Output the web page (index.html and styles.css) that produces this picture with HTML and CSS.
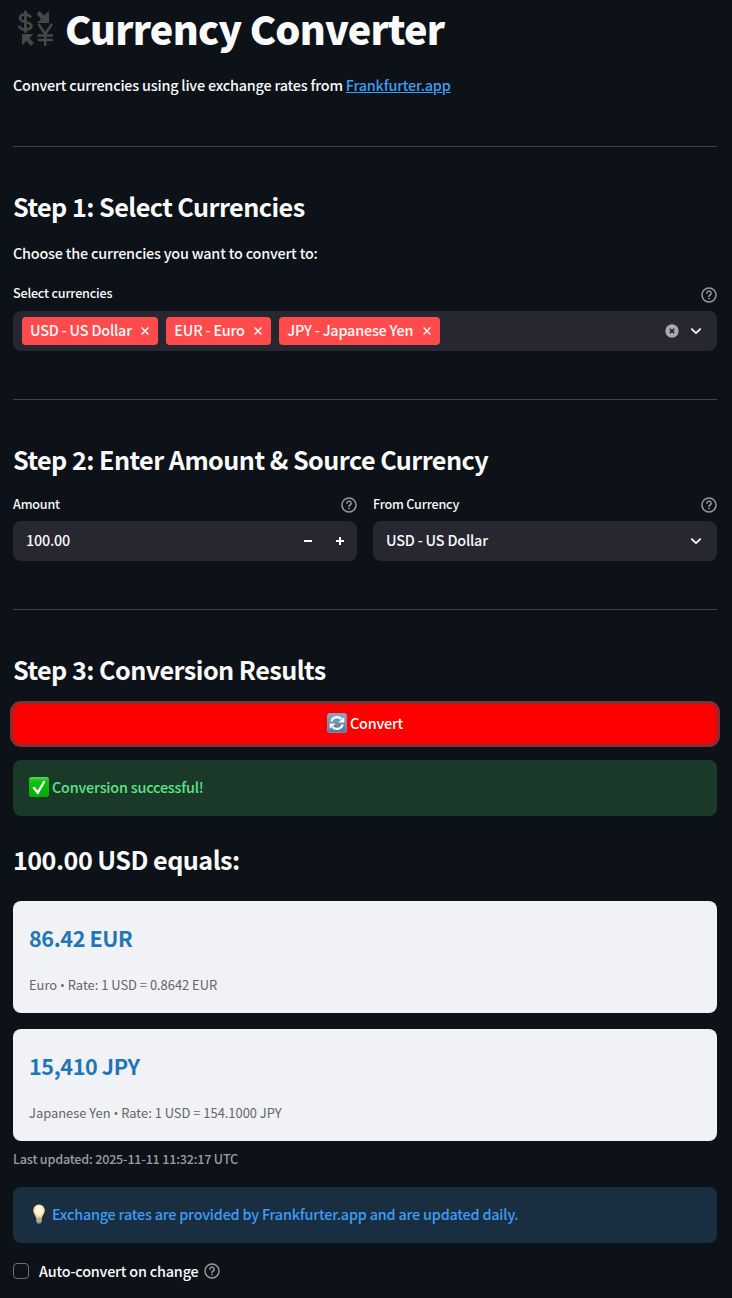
FILE: index.html
```
<!DOCTYPE html>
<html lang="en">
<head>
  <meta charset="UTF-8">
  <title>Currency Converter</title>
  <meta name="viewport" content="width=device-width,initial-scale=1">
  <link rel="stylesheet" href="styles.css">
</head>
<body>
  <!-- shared icons -->
  <svg class="defs" width="0" height="0">
    <symbol id="help" viewBox="0 0 16 16">
      <circle cx="8" cy="8" r="7" fill="none" stroke="currentColor" stroke-width="1.500"/>
      <path d="M5.900 6.200a2.100 2.100 0 1 1 3.200 1.800c-.7.45-1.100.8-1.100 1.400" fill="none" stroke="currentColor" stroke-width="1.500" stroke-linecap="round"/>
      <circle cx="8" cy="11.600" r=".9" fill="currentColor"/>
    </symbol>
    <symbol id="chevron" viewBox="0 0 16 16">
      <path d="M3.800 6.200 8 10.200l4.200-4" fill="none" stroke="currentColor" stroke-width="1.800" stroke-linecap="round" stroke-linejoin="round"/>
    </symbol>
    <symbol id="cross" viewBox="0 0 10 10">
      <path d="M1.600 1.600l6.800 6.800M8.400 1.600L1.600 8.400" fill="none" stroke="currentColor" stroke-width="1.400"/>
    </symbol>
  </svg>

  <div class="container">
    <h1>
      <svg class="logo" viewBox="0 0 36 36" fill="none" stroke="currentColor">
        <path d="M14 7.500C12.500 5 10.500 4.300 8.300 4.300 5 4.300 2.900 5.700 2.900 8c0 5.200 11.400 2.800 11.400 7.800 0 2.500-2.500 3.700-5.800 3.700-3.200 0-5.600-1.300-6.500-3.800M8.400.8v22" stroke-width="2.800"/>
        <path d="M32 1v12H20l4-4-4.500-5 3-3 4.800 4.500z" fill="currentColor" stroke="none"/>
        <path d="M5 24h11.500l-4 4 4.500 5-3 3-4.700-5L5 35.500z" fill="currentColor" stroke="none"/>
        <path d="M21.500 14l6.700 10 6.700-10M28.200 23v13M20.500 25.500h15.500M20.500 30h15.500" stroke-width="2.500"/>
      </svg>
      <span>Currency Converter</span>
    </h1>
    <p class="intro">Convert currencies using live exchange rates from <a href="#">Frankfurter.app</a></p>

    <hr>

    <h2>Step 1: Select Currencies</h2>
    <p class="hint">Choose the currencies you want to convert to:</p>
    <div class="field">
      <div class="label"><span>Select currencies</span><svg class="help"><use href="#help"/></svg></div>
      <div class="input multi">
        <span class="tag"><span>USD - US Dollar</span><svg><use href="#cross"/></svg></span>
        <span class="tag"><span>EUR - Euro</span><svg><use href="#cross"/></svg></span>
        <span class="tag"><span>JPY - Japanese Yen</span><svg><use href="#cross"/></svg></span>
        <svg class="clear" viewBox="0 0 14 14">
          <circle cx="7" cy="7" r="6.700" fill="#a9aaae"/>
          <path d="M4.800 4.800l4.400 4.400M9.200 4.800L4.800 9.200" stroke="#262730" stroke-width="1.700"/>
        </svg>
        <svg class="chevron"><use href="#chevron"/></svg>
      </div>
    </div>

    <hr>

    <h2>Step 2: Enter Amount &amp; Source Currency</h2>
    <div class="columns">
      <div class="field">
        <div class="label"><span>Amount</span><svg class="help"><use href="#help"/></svg></div>
        <div class="input number">
          <span class="value">100.00</span>
          <svg class="step" viewBox="0 0 10 10"><path d="M1 5h8" stroke="currentColor" stroke-width="2"/></svg>
          <svg class="step" viewBox="0 0 10 10"><path d="M1 5h8M5 1v8" stroke="currentColor" stroke-width="2"/></svg>
        </div>
      </div>
      <div class="field">
        <div class="label"><span>From Currency</span><svg class="help"><use href="#help"/></svg></div>
        <div class="input">
          <span class="value">USD - US Dollar</span>
          <svg class="chevron"><use href="#chevron"/></svg>
        </div>
      </div>
    </div>

    <hr>

    <h2>Step 3: Conversion Results</h2>
    <button class="btn">
      <svg class="emoji" viewBox="0 0 20 20">
        <defs>
          <linearGradient id="blue" x2="0" y2="1"><stop stop-color="#86a9c6"/><stop offset="1" stop-color="#52799e"/></linearGradient>
        </defs>
        <rect x=".3" y=".3" width="19.400" height="19.400" rx="3" fill="url(#blue)" stroke="#9bb2c6" stroke-width=".6"/>
        <path d="M4.300 8.500A6 6 0 0 1 14.500 6M15.700 11.500A6 6 0 0 1 5.500 14" fill="none" stroke="#fff" stroke-width="2.200"/>
        <path d="M17.300 4v5.500h-6zM2.700 16v-5.500h6z" fill="#fff"/>
      </svg>
      <span>Convert</span>
    </button>

    <div class="alert success">
      <svg class="emoji" viewBox="0 0 20 20">
        <defs>
          <linearGradient id="green" x2="0" y2="1"><stop stop-color="#61d665"/><stop offset=".2" stop-color="#0bc40f"/><stop offset="1" stop-color="#06a90a"/></linearGradient>
        </defs>
        <rect width="20" height="20" rx="2.500" fill="url(#green)"/>
        <path d="M4.300 10.300l4.500 5.300L15.500 4" fill="none" stroke="#fff" stroke-width="2.400"/>
      </svg>
      <span>Conversion successful!</span>
    </div>

    <h2 class="total">100.00 USD equals:</h2>
    <div class="card">
      <h3>86.42 EUR</h3>
      <p>Euro <span class="dot">•</span> Rate: 1 USD = 0.8642 EUR</p>
    </div>
    <div class="card">
      <h3>15,410 JPY</h3>
      <p>Japanese Yen <span class="dot">•</span> Rate: 1 USD = 154.1000 JPY</p>
    </div>
    <p class="caption">Last updated: 2025-11-11 11:32:17 UTC</p>

    <div class="alert info">
      <svg class="emoji" viewBox="0 0 20 20">
        <defs>
          <radialGradient id="glow" cy=".4"><stop stop-color="#fffef4"/><stop offset=".6" stop-color="#fff3cf"/><stop offset="1" stop-color="#f0c878"/></radialGradient>
        </defs>
        <path d="M10 .5a5.700 5.700 0 0 0-5.800 5.800c0 3.500 2.600 5 3.100 8.700h5.400c.5-3.700 3.100-5.200 3.100-8.700A5.700 5.700 0 0 0 10 .5z" fill="url(#glow)"/>
        <path d="M7.300 14.500h5.400v3.300L11.500 19.500h-3l-1.200-1.700z" fill="#98999a"/>
        <path d="M7.300 16.300h5.400" stroke="#d0d0d0" stroke-width=".8"/>
      </svg>
      <span>Exchange rates are provided by Frankfurter.app and are updated daily.</span>
    </div>

    <label class="check">
      <input type="checkbox">
      <span>Auto-convert on change</span>
      <svg class="help"><use href="#help"/></svg>
    </label>
  </div>
</body>
</html>
```
FILE: styles.css
```
* {
  box-sizing: border-box;
}
body {
  margin: 0;
  min-height: 100vh;
  background: #0d1118;
  color: #fafafa;
  font-family: 'Noto Sans CJK SC', 'Noto Sans', sans-serif;
  font-size: 14.4px;
  font-weight: 500;
  letter-spacing: -0.2px;
  line-height: 24px;
}
.defs {
  position: absolute;
}
svg {
  flex: none;
}
.container {
  padding: 0 15px 0 13px;
}
h1, h2, h3, p {
  margin: 0;
}
h1 {
  display: flex;
  align-items: center;
  height: 60px;
  padding-bottom: 4px;
  font-size: 39.6px;
  font-weight: 900;
  letter-spacing: -0.8px;
  line-height: 56px;
}
.logo {
  width: 36px;
  height: 36px;
  margin: 0 12px 0 4px;
  color: #464646;
}
.intro {
  margin-top: 13px;
}
.intro a {
  color: #3d9df3;
}
hr {
  height: 1px;
  margin: 48px 0 41px;
  border: 0;
  background: #404247;
}
.intro + hr {
  margin-top: 49px;
}
h2 {
  font-size: 25.2px;
  font-weight: 700;
  letter-spacing: -0.55px;
  line-height: 36px;
}
.hint {
  margin-top: 17px;
}
.hint + .field {
  margin-top: 20px;
}
.hint + .field .label {
  margin-bottom: 10px;
}
.label {
  display: flex;
  justify-content: space-between;
  align-items: center;
  height: 16px;
  margin-bottom: 9px;
  font-size: 12.6px;
  line-height: 16px;
}
.help {
  width: 16px;
  height: 16px;
  color: #97989b;
}
.label .help {
  margin-top: 2px;
}
.hint + .field .help {
  margin-top: 4px;
}
.input {
  display: flex;
  align-items: center;
  height: 40px;
  padding: 0 13px;
  border-radius: 8px;
  background: #262730;
}
.value {
  flex: 1;
  margin-top: -2px;
}
.multi {
  gap: 8px;
  padding-left: 9px;
}
.tag {
  display: flex;
  align-items: center;
  height: 28px;
  padding: 0 8px;
  border-radius: 4px;
  background: #ff4b4b;
}
.tag span {
  margin-top: -2px;
}
.tag svg {
  width: 10px;
  height: 10px;
  margin-left: 8.5px;
}
.clear {
  width: 14px;
  height: 14px;
  margin-left: auto;
}
.chevron {
  width: 16px;
  height: 16px;
}
.multi .chevron {
  margin-left: 1px;
}
.number {
  gap: 22px;
  padding-right: 12px;
}
.step {
  width: 10px;
  height: 10px;
}
.columns {
  display: grid;
  grid-template-columns: 1fr 1fr;
  gap: 16px;
  margin-top: 19px;
}
.btn {
  display: flex;
  justify-content: center;
  align-items: center;
  gap: 3px;
  width: 100%;
  height: 40px;
  margin: 17px 0 16px;
  padding: 0 0 2px;
  border: 0;
  border-radius: 8px;
  background: #ff0000;
  box-shadow: 0 0 0 3px rgba(255,75,75,0.5);
  color: #fff;
  font: inherit;
  letter-spacing: inherit;
}
.emoji {
  width: 20px;
  height: 20px;
}
.alert {
  display: flex;
  align-items: center;
  gap: 3px;
  height: 56px;
  padding: 0 16px 2px;
  border-radius: 8px;
}
.success {
  background: #1a3929;
  color: #5ce488;
}
.info {
  background: #1a2e42;
  color: #3d9df3;
}
.total {
  margin: 25px 0 24px;
}
.card {
  height: 112px;
  margin-bottom: 16px;
  padding: 20px 16px;
  border-radius: 8px;
  background: #f0f2f6;
}
.card h3 {
  color: #1f77b4;
  font-size: 21.6px;
  font-weight: 700;
  letter-spacing: -0.4px;
  line-height: 34px;
}
.card p {
  margin-top: 18px;
  color: #666;
  font-size: 12.9px;
  font-weight: 400;
  letter-spacing: 0;
  line-height: 24px;
}
.dot {
  font-family: 'Open Sans', sans-serif;
  line-height: 1;
}
.caption {
  margin: -9px 0 18px;
  color: #9b9ca0;
  font-size: 12.6px;
  line-height: 21px;
}
.check {
  display: flex;
  align-items: center;
  height: 24px;
  margin-top: 16px;
}
.check input {
  width: 16px;
  height: 16px;
  margin: 0 10px 0 0;
  border: 1px solid #6d6f75;
  border-radius: 4px;
  appearance: none;
}
.check span {
  margin-top: -1px;
}
.check .help {
  margin-left: 6px;
}
```
